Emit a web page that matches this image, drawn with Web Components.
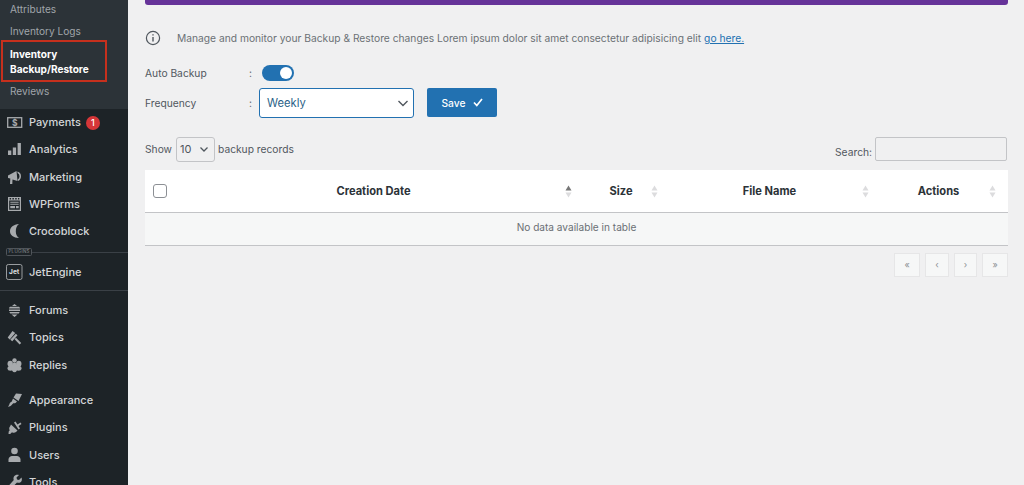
<!DOCTYPE html>
<html>
<head>
<meta charset="utf-8">
<title>Inventory Backup/Restore</title>
<style>
  html, body { margin: 0; height: 100%; overflow: hidden; background: #f0f0f1; }
  body { font-family: Inter, "Liberation Sans", sans-serif; }
</style>
</head>
<body>
<admin-page></admin-page>

<script>
"use strict";

(function() {
  const icons = {
    payments: '<rect x="2.700" y="4.700" width="14" height="9.600" fill="none" stroke="currentColor" stroke-width="1.300"/><text x="9.700" y="12.600" font-size="8.500" font-weight="700" text-anchor="middle" fill="currentColor" font-family="Inter">$</text>',
    analytics: '<path d="M3 10.500h3.300V15H3zM7.800 7.500h3.300V15H7.800zM12.600 3h3.300v12h-3.300z"/>',
    marketing: '<path d="M3 7.500l8.500-4.500 1 10-5-1.500-.2 4.500H5l.3-5.500L3 10z"/><path d="M12.500 3.500a5 5 0 0 1 3.500 4.800 5 5 0 0 1-3 4.700l-.3-1.500a3.500 3.500 0 0 0 1.800-3.200 3.500 3.500 0 0 0-2-3.200z"/>',
    wpforms: '<path fill-rule="evenodd" d="M3 2h13v14H3zM4.200 5.500v9.300h10.600V5.500zM4.600 2.900v1.700h1.500V2.900zm2.800 0v1.700h1.500V2.900zm2.800 0v1.700h1.500V2.900zm2.800 0v1.700h1.300V2.900z"/><path d="M5.300 6.700h8.400v1H5.300zm0 2h8.400v1H5.300zm0 2.200h4.700v2.400H5.300zm5.700 0h2.700v2.400H11z"/>',
    crocoblock: '<path d="M14 2C8.500 2.500 5 5.200 5 9.200s3.500 6.500 9 6.800c-2.100-1.500-3.200-3.700-3.200-6.800S11.900 3.500 14 2z"/>',
    jetengine: '<rect x="1.500" y="1.500" width="15.500" height="15" rx="1.800" fill="none" stroke="currentColor" stroke-width=".9"/><text x="9.200" y="11" font-size="6.500" font-weight="800" text-anchor="middle" fill="#d3d5d7" font-family="Inter">Jet</text>',
    forums: '<path d="M9.500 3l2.500 2H7zM5 5.800h9c.8.700 1 1.200 1 1.700H4c0-.5.200-1 1-1.700zM4 8.500h11V10H4zM4.300 11h10.400l-1 1.600H5.300zM6.500 13.400h6L9.500 16z"/>',
    topics: '<path d="M7.500 3l2.700 2-5.500 6.500-2-2zM10.800 5.700l1.700 1.600-5.200 6-2-1.500zM11 9.700l5.200 5.200-1.600 1.600-5-5.300z"/>',
    replies: '<circle cx="9.500" cy="4.500" r="2.200"/><ellipse cx="5.200" cy="7.800" rx="2.700" ry="3"/><ellipse cx="13.800" cy="7.800" rx="2.700" ry="3"/><ellipse cx="5.500" cy="12.300" rx="3" ry="2.500"/><ellipse cx="13.500" cy="12.300" rx="3" ry="2.500"/><ellipse cx="9.500" cy="11.500" rx="2.800" ry="4.800"/>',
    appearance: '<path d="M11 2.500l6 .5-3.500 7-5-3.500zM8 7.500l4 3-1.500 1.500c-1 .5-2 0-2.500.5-1 1-1.500 2.500-5 3.500 1.500-2 1.300-3.500 2.300-4.500.5-.5 1-.5 1.500-1z"/>',
    plugins: '<path d="M6 6.500l6.500 6-1.500 1.500c-1.300 1-2.800 1-4 .2L5.200 16H3.500l.2-2.500 1-1.200c-.8-1.300-.6-2.700.3-3.800z"/><path d="M9 4.500l1.500-1 2 3 3-2 1 1.500-3 2 1.500 2.500-1.500 1z"/>',
    users: '<circle cx="9.500" cy="5" r="3.300"/><path d="M3.500 16v-2.500c0-2 2-3.500 3.500-3.500h5c1.500 0 3.500 1.500 3.500 3.500V16z"/>',
    tools: '<path d="M16.500 4.500L14 7l-2-.5-.5-2L14 2c-2-.7-4 0-5 1.500-.7 1.200-.7 2.500-.2 3.500L3 13.500c-.7.800-.7 1.800 0 2.500s1.700.7 2.500 0L12 9.500c1.200.5 2.500.4 3.500-.3 1.500-1 1.700-2.800 1-4.700z"/>'
  };

  class SideItem extends HTMLElement {
    constructor() {
      super();
      this.attachShadow({mode: 'open'});
      const icon = this.getAttribute('icon');
      this.shadowRoot.innerHTML = `
      <style>
        :host { display: flex; align-items: center; height: 27.3px; padding-left: 5px; color: #d3d5d7; font-size: 11px; font-weight: 500; }
        svg { width: 18px; height: 18px; margin-right: 6px; fill: currentColor; color: #a7aaad; flex: none; }
      </style>
      <svg viewBox="0 0 18 18">${icons[icon] || ''}</svg><slot></slot>`;
    }
  }
  customElements.define('side-item', SideItem);

  const sidebarTemplate = document.createElement('template');
  sidebarTemplate.innerHTML = `
  <style>
    :host { display: block; width: 128px; flex: none; height: 485px; background: #1d2327; overflow: hidden; }
    .sub { background: #2c3338; height: 109px; box-sizing: border-box; padding: 2px 0 0 10px; font-size: 10.100px; color: #a0a5aa; }
    .row { height: 14px; line-height: 14px; margin-bottom: 8px; }
    .row.logs { margin-bottom: 9px; }
    .reviews { height: 14px; line-height: 14px; }
    .current { position: relative; color: #fff; font-weight: 700; font-size: 10.100px; margin-bottom: 8px; }
    .current div { height: 14.500px; line-height: 14.500px; }
    .current::before { content: ""; position: absolute; left: -9px; top: -7px; width: 106px; height: 42px; border: 2px solid #c6301d; box-sizing: border-box; }
    .first { margin-top: -.5px; }
    .plugins { height: 14.200px; position: relative; }
    .plugins::before { content: ""; position: absolute; left: 6px; right: 0; top: 7px; border-top: 1px solid #3a4046; }
    .plugins span { position: absolute; left: 6px; top: 3.500px; font-size: 4.400px; letter-spacing: .3px; line-height: 6px; padding: 0 1.500px; color: #8c8f94; background: #1d2327; border: .5px solid #50555a; border-radius: 1.500px; }
    .rule { border-top: 1px solid #3a4046; margin-top: 5px; margin-bottom: 5.300px; }
    .gap { height: 7.500px; }
    .lower { height: 27.6px; }
    .badge { display: inline-block; width: 14px; height: 14px; line-height: 14px; border-radius: 50%; background: #d63638; color: #fff; font-size: 9px; text-align: center; margin-left: 5px; position: relative; top: 1px; }
    .jet { height: 26px; }
  </style>
  <div class="sub">
    <div class="row">Attributes</div>
    <div class="row logs">Inventory Logs</div>
    <div class="current"><div>Inventory</div><div>Backup/Restore</div></div>
    <div class="reviews">Reviews</div>
  </div>
  <div class="first">
    <side-item icon="payments">Payments<span class="badge">1</span></side-item>
    <side-item icon="analytics">Analytics</side-item>
    <side-item icon="marketing">Marketing</side-item>
    <side-item icon="wpforms">WPForms</side-item>
    <side-item icon="crocoblock">Crocoblock</side-item>
  </div>
  <div class="plugins"><span>PLUGINS</span></div>
  <side-item icon="jetengine" class="jet">JetEngine</side-item>
  <div class="rule"></div>
  <side-item icon="forums">Forums</side-item>
  <side-item icon="topics">Topics</side-item>
  <side-item icon="replies">Replies</side-item>
  <div class="gap"></div>
  <side-item icon="appearance" class="lower">Appearance</side-item>
  <side-item icon="plugins" class="lower">Plugins</side-item>
  <side-item icon="users" class="lower">Users</side-item>
  <side-item icon="tools" class="lower">Tools</side-item>`;

  class AdminSidebar extends HTMLElement {
    constructor() {
      super();
      this.attachShadow({mode: 'open'});
      this.shadowRoot.appendChild(sidebarTemplate.content.cloneNode(true));
    }
  }
  customElements.define('admin-sidebar', AdminSidebar);

  class ToggleSwitch extends HTMLElement {
    constructor() {
      super();
      this.attachShadow({mode: 'open'});
      this.shadowRoot.innerHTML = `
      <style>
        :host { display: flex; align-items: center; justify-content: flex-end; width: 32px; height: 16px; box-sizing: border-box; padding-right: 2px; border-radius: 8px; background: #2271b1; }
        i { display: block; width: 12px; height: 12px; border-radius: 50%; background: #fff; }
      </style>
      <i></i>`;
    }
  }
  customElements.define('toggle-switch', ToggleSwitch);

  const backupTemplate = document.createElement('template');
  backupTemplate.innerHTML = `
  <style>
    :host { display: block; color: #50575e; font-size: 10.250px; }
    .notice { display: flex; align-items: center; height: 17px; margin-top: 25px; }
    .notice svg { width: 16px; height: 16px; margin-right: 16px; }
    .notice a { color: #2271b1; margin-left: 3px; }
    .notice span { color: #6b7075; }
    .row { display: flex; align-items: center; }
    .auto { height: 16px; margin-top: 18px; }
    .freq { margin-top: 7px; height: 30px; }
    .label { width: 104px; }
    .auto .colon { width: 13px; }
    .freq .colon { width: 10px; }
    .select { display: flex; align-items: center; justify-content: space-between; box-sizing: border-box; width: 155px; height: 30px; padding: 0 4px 0 7px; background: #fff; border: 1.500px solid #2271b1; border-radius: 3px; color: #2b5f87; font-size: 11.200px; }
    .save { display: flex; align-items: center; justify-content: center; gap: 7px; width: 70px; height: 29px; margin-left: 13px; background: #2271b1; color: #fff; border-radius: 2px; font-size: 10.250px; font-weight: 500; }
  </style>
  <div class="notice">
    <svg viewBox="0 0 16 16" fill="none" stroke="#50575e" stroke-width="1.200"><circle cx="8" cy="8" r="6.600"/><path d="M8 7v4.500" stroke-width="1.400"/><path d="M8 4.200v1.400" stroke-width="1.400"/></svg>
    <span>Manage and monitor your Backup &amp; Restore changes Lorem ipsum dolor sit amet consectetur adipisicing elit</span><a href="#">go here.</a>
  </div>
  <div class="row auto">
    <span class="label">Auto Backup</span><span class="colon">:</span><toggle-switch></toggle-switch>
  </div>
  <div class="row freq">
    <span class="label">Frequency</span><span class="colon">:</span>
    <div class="select">Weekly
      <svg width="12" height="12" viewBox="0 0 12 12" fill="none" stroke="#50575e" stroke-width="1.400"><path d="M1.500 4l4.500 4.500L10.500 4"/></svg>
    </div>
    <div class="save">Save
      <svg width="10" height="9" viewBox="0 0 10 9" fill="none" stroke="#fff" stroke-width="1.700"><path d="M1 4.500l2.800 3L9 1"/></svg>
    </div>
  </div>`;

  class BackupForm extends HTMLElement {
    constructor() {
      super();
      this.attachShadow({mode: 'open'});
      this.shadowRoot.appendChild(backupTemplate.content.cloneNode(true));
    }
  }
  customElements.define('backup-form', BackupForm);

  class SortArrows extends HTMLElement {
    constructor() {
      super();
      this.attachShadow({mode: 'open'});
      const up = this.hasAttribute('asc') ? '#777' : '#dcdcde';
      this.shadowRoot.innerHTML = `
      <style>:host { display: inline-flex; } svg { display: block; }</style>
      <svg width="7" height="13" viewBox="0 0 7 13"><path d="M3.500 0.500L6.500 5.500H.5z" fill="${up}"/><path d="M3.500 12.500L6.500 7.500H.5z" fill="#dcdcde"/></svg>`;
    }
  }
  customElements.define('sort-arrows', SortArrows);

  const tableTemplate = document.createElement('template');
  tableTemplate.innerHTML = `
  <style>
    :host { display: block; color: #50575e; font-size: 10.250px; }
    .controls { display: flex; justify-content: space-between; align-items: flex-start; margin-top: 19px; height: 33px; }
    .show { display: flex; align-items: center; gap: 3px; }
    .len { display: flex; align-items: center; justify-content: space-between; box-sizing: border-box; width: 39px; height: 25px; margin-left: 1px; padding: 0 5px 0 3px; border: 1px solid #c3c4c7; border-radius: 3px; font-size: 11px; }
    .search { display: flex; align-items: flex-end; gap: 3px; margin-right: 1px; }
    .search span { line-height: 14px; margin-bottom: 2px; }
    .search input { box-sizing: border-box; width: 132px; height: 24px; background: #f0f0f1; border: 1px solid #c3c4c7; border-radius: 2px; margin: 0; }
    .head { display: grid; grid-template-columns: 433px 86px 211px 133px; height: 42px; background: #fff; border-bottom: 1px solid #c3c4c7; color: #2c3338; font-weight: 700; font-size: 11.100px; }
    .cell { position: relative; display: flex; align-items: center; justify-content: center; padding-top: 1px; }
    .cell sort-arrows { position: absolute; top: 15px; }
    .check { position: absolute; left: 8px; top: 14px; box-sizing: border-box; width: 14px; height: 14px; background: #fff; border: 1px solid #8c8f94; border-radius: 3px; }
    .empty { height: 33px; display: flex; align-items: center; justify-content: center; padding-bottom: 3px; box-sizing: border-box; background: #f6f7f7; border-bottom: 1px solid #c3c4c7; font-size: 10.100px; color: #6b7075; }
    .pager { display: flex; justify-content: flex-end; margin-top: 7px; }
    .pager span { box-sizing: border-box; height: 24px; display: flex; align-items: center; justify-content: center; background: #f6f7f7; border: 1px solid #e6e6e7; font-size: 9px; color: #8c8f94; margin-left: 5px; }
  </style>
  <div class="controls">
    <div class="show">Show <div class="len">10
      <svg width="10" height="10" viewBox="0 0 10 10" fill="none" stroke="#50575e" stroke-width="1.300"><path d="M1.500 3.500L5 7l3.500-3.500"/></svg></div> backup records</div>
    <div class="search"><span>Search:</span><input type="text"></div>
  </div>
  <div class="head">
    <div class="cell"><span class="check"></span><span style="margin-left:24px">Creation Date</span><sort-arrows asc style="right:6px"></sort-arrows></div>
    <div class="cell">Size<sort-arrows style="right:6px"></sort-arrows></div>
    <div class="cell">File Name<sort-arrows style="right:6px"></sort-arrows></div>
    <div class="cell"><span style="margin-right:6px">Actions</span><sort-arrows style="right:12px"></sort-arrows></div>
  </div>
  <div class="empty">No data available in table</div>
  <div class="pager">
    <span style="width:26px">«</span><span style="width:24px">‹</span><span style="width:23px">›</span><span style="width:26px">»</span>
  </div>`;

  class RecordsTable extends HTMLElement {
    constructor() {
      super();
      this.attachShadow({mode: 'open'});
      this.shadowRoot.appendChild(tableTemplate.content.cloneNode(true));
    }
  }
  customElements.define('records-table', RecordsTable);

  const pageTemplate = document.createElement('template');
  pageTemplate.innerHTML = `
  <style>
    :host { display: flex; width: 1024px; height: 485px; overflow: hidden; background: #f0f0f1; }
    main { flex: 1; padding: 0 16px 0 17px; min-width: 0; }
    .bar { height: 4.500px; background: #663399; border-radius: 0 0 3px 3px; }
  </style>
  <admin-sidebar></admin-sidebar>
  <main>
    <div class="bar"></div>
    <backup-form></backup-form>
    <records-table></records-table>
  </main>`;

  class AdminPage extends HTMLElement {
    constructor() {
      super();
      this.attachShadow({mode: 'open'});
      this.shadowRoot.appendChild(pageTemplate.content.cloneNode(true));
    }
  }
  customElements.define('admin-page', AdminPage);
}).call(this);
</script>
</body>
</html>
